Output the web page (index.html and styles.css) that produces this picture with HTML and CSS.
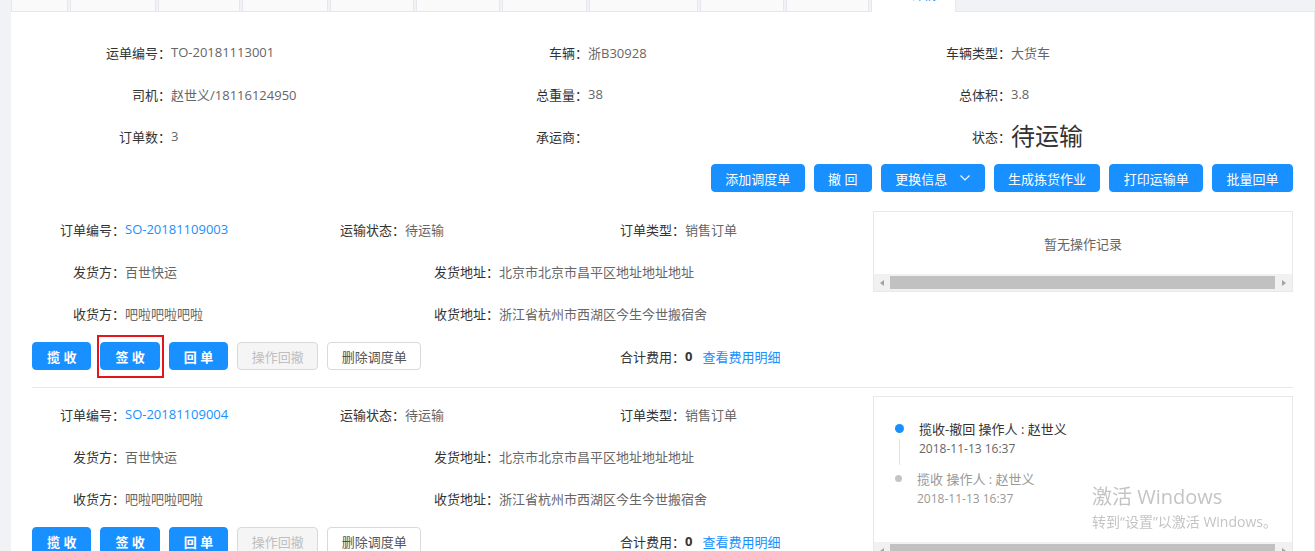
FILE: index.html
```html
<!DOCTYPE html>
<html lang="zh-CN">
<head>
<meta charset="utf-8">
<title>运单详情</title>
<link rel="stylesheet" href="styles.css">
</head>
<body>
<div class="page">
  <div class="tabs">
    <div class="tab"></div>
    <div class="tab"></div>
    <div class="tab"></div>
    <div class="tab"></div>
    <div class="tab"></div>
    <div class="tab"></div>
    <div class="tab"></div>
    <div class="tab"></div>
    <div class="tab"></div>
    <div class="tab"></div>
    <div class="tab active"><span class="tab-text">详情</span></div>
  </div>

  <div class="panel">
    <div class="summary">
      <div class="field"><span class="label">运单编号：</span><span class="value">TO-20181113001</span></div>
      <div class="field"><span class="label">车辆：</span><span class="value">浙B30928</span></div>
      <div class="field"><span class="label">车辆类型：</span><span class="value">大货车</span></div>
      <div class="field"><span class="label">司机：</span><span class="value">赵世义/18116124950</span></div>
      <div class="field"><span class="label">总重量：</span><span class="value">38</span></div>
      <div class="field"><span class="label">总体积：</span><span class="value">3.8</span></div>
      <div class="field"><span class="label">订单数：</span><span class="value">3</span></div>
      <div class="field"><span class="label">承运商：</span><span class="value"></span></div>
      <div class="field"><span class="label">状态：</span><span class="status">待运输</span></div>
    </div>

    <div class="toolbar">
      <button class="btn">添加调度单</button>
      <button class="btn">撤 回</button>
      <button class="btn">更换信息<svg class="chev" width="10" height="6" viewBox="0 0 10 6"><polyline points="0.5,0.5 5,5 9.5,0.5" fill="none" stroke="#fff" stroke-width="1.2"/></svg></button>
      <button class="btn">生成拣货作业</button>
      <button class="btn">打印运输单</button>
      <button class="btn">批量回单</button>
    </div>

    <div class="order">
      <div class="order-main">
        <div class="ogrid">
          <div class="item"><span class="label">订单编号：</span><span class="link">SO-20181109003</span></div>
          <div class="item"><span class="label">运输状态：</span><span class="value">待运输</span></div>
          <div class="item"><span class="label">订单类型：</span><span class="value">销售订单</span></div>
          <div class="item"><span class="label">发货方：</span><span class="value">百世快运</span></div>
          <div class="item wide"><span class="label">发货地址：</span><span class="value">北京市北京市昌平区地址地址地址</span></div>
          <div class="item"><span class="label">收货方：</span><span class="value">吧啦吧啦吧啦</span></div>
          <div class="item wide"><span class="label">收货地址：</span><span class="value">浙江省杭州市西湖区今生今世搬宿舍</span></div>
        </div>
        <div class="ofoot">
          <div class="actions">
            <button class="btn strong">揽 收</button>
            <button class="btn strong marked">签 收</button>
            <button class="btn strong">回 单</button>
            <button class="btn disabled">操作回撤</button>
            <button class="btn plain">删除调度单</button>
          </div>
          <div class="item total"><span class="label">合计费用：</span><span class="sum">0</span><span class="link more">查看费用明细</span></div>
        </div>
      </div>
      <div class="log">
        <div class="log-body empty">暂无操作记录</div>
        <div class="hscroll"><span class="arrow left"></span><span class="thumb"></span><span class="arrow right"></span></div>
      </div>
    </div>

    <div class="order">
      <div class="order-main">
        <div class="ogrid">
          <div class="item"><span class="label">订单编号：</span><span class="link">SO-20181109004</span></div>
          <div class="item"><span class="label">运输状态：</span><span class="value">待运输</span></div>
          <div class="item"><span class="label">订单类型：</span><span class="value">销售订单</span></div>
          <div class="item"><span class="label">发货方：</span><span class="value">百世快运</span></div>
          <div class="item wide"><span class="label">发货地址：</span><span class="value">北京市北京市昌平区地址地址地址</span></div>
          <div class="item"><span class="label">收货方：</span><span class="value">吧啦吧啦吧啦</span></div>
          <div class="item wide"><span class="label">收货地址：</span><span class="value">浙江省杭州市西湖区今生今世搬宿舍</span></div>
        </div>
        <div class="ofoot">
          <div class="actions">
            <button class="btn strong">揽 收</button>
            <button class="btn strong">签 收</button>
            <button class="btn strong">回 单</button>
            <button class="btn disabled">操作回撤</button>
            <button class="btn plain">删除调度单</button>
          </div>
          <div class="item total"><span class="label">合计费用：</span><span class="sum">0</span><span class="link more">查看费用明细</span></div>
        </div>
      </div>
      <div class="log">
        <div class="log-body timeline">
          <div class="tl-item">
            <div class="tl-axis"><span class="dot blue"></span><span class="tail"></span></div>
            <div class="tl-body">
              <div class="tl-title">揽收-撤回 操作人 : 赵世义</div>
              <div class="tl-time">2018-11-13 16:37</div>
            </div>
          </div>
          <div class="tl-item old">
            <div class="tl-axis"><span class="dot gray"></span></div>
            <div class="tl-body">
              <div class="tl-title">揽收 操作人 : 赵世义</div>
              <div class="tl-time">2018-11-13 16:37</div>
            </div>
          </div>
        </div>
        <div class="hscroll"><span class="arrow left"></span><span class="thumb"></span><span class="arrow right"></span></div>
      </div>
    </div>
  </div>
</div>

<div class="watermark">
  <div class="wm-title">激活 Windows</div>
  <div class="wm-sub">转到“设置”以激活 Windows。</div>
</div>
</body>
</html>
```

FILE: styles.css
```css
* { box-sizing: border-box; }

html, body {
  margin: 0;
  height: 551px;
  overflow: hidden;
}

body {
  background: #f0f2f5;
  font-family: "Open Sans", "Noto Sans CJK SC", sans-serif;
  font-size: 13px;
  color: #333;
}

.page {
  margin-left: 11px;
  width: 1304px;
}

/* tab strip (scrolled, only bottom edge visible) */
.tabs {
  display: flex;
  height: 12px;
  border-bottom: 1px solid #e4e7ed;
}

.tab {
  flex: none;
  height: 11px;
  margin-right: 2px;
  background: #fafafa;
  border-left: 1px solid #e4e7ed;
  border-right: 1px solid #e4e7ed;
  overflow: hidden;
}

.tab:nth-child(1) { width: 57px; }
.tab:nth-child(2) { width: 86px; }
.tab:nth-child(3) { width: 82px; }
.tab:nth-child(4) { width: 86px; }
.tab:nth-child(5) { width: 84px; }
.tab:nth-child(6) { width: 84px; }
.tab:nth-child(7) { width: 85px; }
.tab:nth-child(8) { width: 109px; }
.tab:nth-child(9) { width: 84px; }
.tab:nth-child(10) { width: 83px; }

.tab.active {
  width: 85px;
  height: 12px;
  background: #fff;
  color: #1890ff;
}

.tab-text {
  display: block;
  margin-top: -14px;
  line-height: 16px;
  font-size: 13px;
  text-align: right;
  padding-right: 18px;
}

/* main panel */
.panel {
  background: #fff;
  border-right: 1px solid #e8e8e8;
  padding: 22px 21px 0;
  height: 539px;
}

.summary {
  display: grid;
  grid-template-columns: 417px 423px 1fr;
  row-gap: 6px;
}

.field {
  display: flex;
  align-items: center;
  height: 36px;
}

.field .label {
  flex: none;
  width: 139px;
  text-align: right;
  color: #333;
}

.value { color: #666; }

.status {
  font-size: 24px;
  line-height: 36px;
  color: #333;
}

.toolbar {
  display: flex;
  justify-content: flex-end;
  gap: 9px;
  margin-top: 10px;
}

.btn {
  height: 28px;
  padding: 0 13.4px;
  border: 1px solid #1890ff;
  border-radius: 4px;
  background: #1890ff;
  color: #fff;
  font-family: inherit;
  font-size: 13px;
  display: inline-flex;
  align-items: center;
  justify-content: center;
  white-space: pre;
  position: relative;
}

.actions .btn { padding: 0 13.5px; }

.actions .btn.strong {
  font-weight: 700;
  padding: 0 14px;
}

.btn.disabled {
  background: #f5f5f5;
  border-color: #d9d9d9;
  color: #bfbfbf;
}

.btn.plain {
  background: #fff;
  border-color: #d9d9d9;
  color: #555;
}

.btn.marked::after {
  content: "";
  position: absolute;
  top: -8px;
  left: -4px;
  right: -5px;
  bottom: -9px;
  border: 2px solid #e5161b;
}

.chev { margin-left: 13px; }

/* order blocks */
.order {
  display: grid;
  grid-template-columns: 1fr 420px;
  margin-top: 10px;
  padding: 9px 0 17px;
  border-bottom: 1px solid #e8e8e8;
}

.order + .order {
  margin-top: 0;
  padding-top: 8px;
}

.ogrid {
  display: grid;
  grid-template-columns: 280px 280px 280px;
  row-gap: 6px;
}

.item {
  display: flex;
  align-items: center;
  height: 36px;
  white-space: nowrap;
}

.item .label {
  flex: none;
  width: 93px;
  text-align: right;
  color: #333;
}

.item.wide { grid-column: span 2; }
.item.wide .label { width: 187px; }

.link { color: #1890ff; }

.ofoot {
  display: grid;
  grid-template-columns: 560px 280px;
  margin-top: 11px;
  height: 28px;
}

.actions {
  display: flex;
  gap: 9px;
}

.total { height: 28px; }

.sum {
  font-weight: 700;
  color: #333;
}

.more { margin-left: 10px; }

/* right log box */
.log {
  align-self: start;
  border: 1px solid #e8e8e8;
}

.log-body.empty {
  height: 62px;
  display: flex;
  align-items: center;
  justify-content: center;
  color: #666;
}

.hscroll {
  height: 17px;
  background: #f1f1f1;
  display: flex;
  align-items: center;
}

.arrow {
  flex: none;
  width: 16px;
  height: 17px;
  display: flex;
  align-items: center;
  justify-content: center;
}

.arrow.right { width: 17px; }

.arrow::before {
  content: "";
  border-top: 3.5px solid transparent;
  border-bottom: 3.5px solid transparent;
}

.arrow.left::before { border-right: 4px solid #a3a3a3; }
.arrow.right::before { border-left: 4px solid #a3a3a3; }

.thumb {
  flex: 1;
  height: 13px;
  background: #c1c1c1;
}

.log-body.timeline {
  height: 145px;
  padding: 22px 0 0 20px;
}

.tl-item {
  display: flex;
}

.tl-axis {
  flex: none;
  width: 10px;
  display: flex;
  flex-direction: column;
  align-items: center;
  padding-top: 5px;
}

.dot {
  display: block;
  border-radius: 50%;
}

.dot.blue {
  width: 9px;
  height: 9px;
  background: #1890ff;
}

.dot.gray {
  width: 7px;
  height: 7px;
  margin-top: 1px;
  margin-left: -1px;
  background: #c4c4c4;
}

.tail {
  display: block;
  width: 1px;
  height: 26px;
  margin-top: 6px;
  background: #e4e4e4;
}

.tl-body {
  margin-left: 15px;
  padding-bottom: 10px;
}

.tl-item.old .tl-body { margin-left: 13px; }

.tl-title {
  line-height: 20px;
  color: #333;
}

.tl-time {
  line-height: 20px;
  font-size: 12px;
  color: #666;
}

.tl-item.old .tl-title,
.tl-item.old .tl-time { color: #999; }

/* OS activation watermark overlay */
.watermark {
  position: fixed;
  left: 1092px;
  top: 484px;
  color: #c4c4c4;
  white-space: nowrap;
  pointer-events: none;
}

.wm-title {
  font-size: 20px;
  line-height: 26px;
}

.wm-sub {
  margin-top: 2px;
  font-size: 14px;
  line-height: 20px;
}
```
